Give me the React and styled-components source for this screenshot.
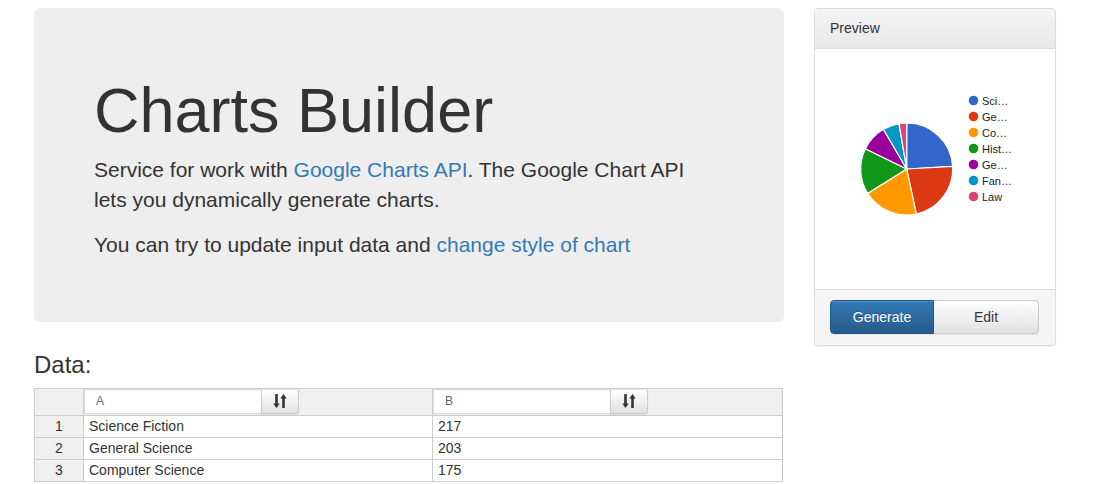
import React from "react";
import styled, { createGlobalStyle } from "styled-components";

const Global = createGlobalStyle`
  html, body { margin: 0; padding: 0; background: #fff; }
  body { font-family: "Liberation Sans", Arial, sans-serif; font-size: 14px; line-height: 1.42857; color: #333; }
  * { box-sizing: border-box; }
`;

const Page = styled.div`
  display: flex;
  align-items: flex-start;
  gap: 30px;
  padding: 8px 34px 0 34px;
`;

const Main = styled.div`
  width: 750px;
  flex: none;
`;

const Side = styled.div`
  width: 242px;
  flex: none;
`;

const Jumbotron = styled.div`
  background: #eee;
  border-radius: 6px;
  padding: 48px 60px 47px;
  margin-bottom: 30px;
`;

const Title = styled.h1`
  margin: 20px 0 10px;
  font-size: 63px;
  font-weight: 500;
  line-height: 1.1;
  color: #333;
`;

const Lead = styled.p`
  margin: 0 0 15px;
  max-width: 605px;
  font-size: 21px;
  font-weight: 200;
  line-height: 1.42857;
  color: #333;
`;

const Link = styled.a`
  color: #337ab7;
  text-decoration: none;
`;

const SectionTitle = styled.h3`
  margin: 0 0 9px;
  font-size: 24px;
  font-weight: 500;
  line-height: 1.1;
  color: #333;
`;

const Grid = styled.table`
  width: 748px;
  border-collapse: collapse;
  table-layout: fixed;
  font-size: 14px;
`;

const HeadCell = styled.th`
  background: #f0f0f0;
  border: 1px solid #ccc;
  padding: 0;
  height: 27px;
  text-align: left;
  font-weight: normal;
  vertical-align: top;
`;

const InputGroup = styled.div`
  display: flex;
  width: 215px;
  height: 25px;
`;

const ColInput = styled.div`
  width: 177px;
  background: #fff;
  border: 1px solid #ddd;
  border-right: none;
  font-size: 12px;
  color: #666;
  padding: 4px 11px;
  line-height: 15px;
  box-shadow: inset 0 1px 1px rgba(0,0,0,0.05);
`;

const SortButton = styled.button`
  width: 38px;
  height: 25px;
  border: 1px solid #ccc;
  border-top-color: #e4e4e4;
  border-radius: 0 3px 3px 0;
  background: linear-gradient(to bottom, #fff 0%, #e0e0e0 100%);
  display: flex;
  align-items: center;
  justify-content: center;
  padding: 0;
  box-shadow: 0 1px 1px rgba(0,0,0,0.08);
`;

const NumCell = styled.td`
  background: #f0f0f0;
  border: 1px solid #ccc;
  text-align: center;
  height: 22px;
  padding: 0;
  line-height: 20px;
  color: #333;
`;

const DataCell = styled.td`
  border: 1px solid #ccc;
  height: 22px;
  padding: 0 5px;
  line-height: 20px;
  color: #333;
  white-space: nowrap;
  overflow: hidden;
`;

const Panel = styled.div`
  border: 1px solid #ddd;
  border-radius: 4px;
  background: #fff;
  box-shadow: 0 1px 2px rgba(0,0,0,0.05);
  overflow: hidden;
`;

const PanelHeading = styled.div`
  padding: 10px 15px;
  height: 40px;
  background: linear-gradient(to bottom, #f5f5f5 0%, #e8e8e8 100%);
  border-bottom: 1px solid #ddd;
  font-size: 14px;
  line-height: 19px;
  color: #333;
`;

const PanelBody = styled.div`
  height: 240px;
  display: flex;
`;

const PanelFooter = styled.div`
  background: #f5f5f5;
  border-top: 1px solid #ddd;
  padding: 10px 15px 11px;
`;

const BtnGroup = styled.div`
  display: flex;
`;

const Btn = styled.button`
  width: ${(p) => p.$w}px;
  height: 34px;
  font-family: "Liberation Sans", Arial, sans-serif;
  font-size: 14px;
  padding: 6px 12px;
  border: 1px solid ${(p) => (p.$primary ? "#245580" : "#ccc")};
  color: ${(p) => (p.$primary ? "#fff" : "#333")};
  background: ${(p) =>
    p.$primary
      ? "linear-gradient(to bottom, #337ab7 0%, #265a88 100%)"
      : "linear-gradient(to bottom, #fff 0%, #e0e0e0 100%)"};
  border-radius: ${(p) => (p.$primary ? "4px 0 0 4px" : "0 4px 4px 0")};
  ${(p) => (p.$primary ? "" : "border-left: none;")}
  text-shadow: ${(p) => (p.$primary ? "0 -1px 0 rgba(0,0,0,0.2)" : "0 1px 0 #fff")};
  box-shadow: inset 0 1px 0 rgba(255,255,255,0.15), 0 1px 1px rgba(0,0,0,0.075);
`;

const SortIcon = () => (
  <svg width="14" height="16" viewBox="0 0 14 16">
    <path d="M3.5 1 V12" stroke="#333" strokeWidth="2.6" />
    <path d="M0.3 10.5 L3.5 15 L6.7 10.5 Z" fill="#333" />
    <path d="M10.5 15 V4" stroke="#333" strokeWidth="2.6" />
    <path d="M7.3 5.5 L10.5 1 L13.7 5.5 Z" fill="#333" />
  </svg>
);

const slices = [
  { label: "Sci…", v: 217, c: "#3366cc" },
  { label: "Ge…", v: 203, c: "#dc3912" },
  { label: "Co…", v: 175, c: "#ff9900" },
  { label: "Hist…", v: 145, c: "#109618" },
  { label: "Ge…", v: 84, c: "#990099" },
  { label: "Fan…", v: 52, c: "#0099c6" },
  { label: "Law", v: 24, c: "#dd4477" },
];

const PieChart = () => {
  const cx = 91.7;
  const cy = 120;
  const r = 46;
  const total = slices.reduce((s, d) => s + d.v, 0);
  let a = 0;
  const paths = slices.map((d, i) => {
    const a0 = a;
    const a1 = a + (d.v / total) * Math.PI * 2;
    a = a1;
    const x0 = cx + r * Math.sin(a0);
    const y0 = cy - r * Math.cos(a0);
    const x1 = cx + r * Math.sin(a1);
    const y1 = cy - r * Math.cos(a1);
    const large = a1 - a0 > Math.PI ? 1 : 0;
    return (
      <path
        key={i}
        d={`M${cx} ${cy} L${x0} ${y0} A${r} ${r} 0 ${large} 1 ${x1} ${y1} Z`}
        fill={d.c}
        stroke="#fff"
        strokeWidth="1.2"
      />
    );
  });
  return (
    <svg width="240" height="240" viewBox="0 0 240 240">
      {paths}
      {slices.map((d, i) => (
        <g key={i}>
          <circle cx="158.5" cy={51.5 + i * 16} r="4.8" fill={d.c} />
          <text
            x="167"
            y={55.5 + i * 16}
            fontFamily="Liberation Sans, Arial, sans-serif"
            fontSize="11"
            fill="#222"
          >
            {d.label}
          </text>
        </g>
      ))}
    </svg>
  );
};

const rows = [
  ["Science Fiction", "217"],
  ["General Science", "203"],
  ["Computer Science", "175"],
];

export default function App() {
  return (
    <>
      <Global />
      <Page>
        <Main>
          <Jumbotron>
            <Title>Charts Builder</Title>
            <Lead>
              Service for work with <Link href="#">Google Charts API</Link>. The Google Chart API
              lets you dynamically generate charts.
            </Lead>
            <Lead>
              You can try to update input data and <Link href="#">change style of chart</Link>
            </Lead>
          </Jumbotron>
          <SectionTitle>Data:</SectionTitle>
          <Grid>
            <colgroup>
              <col style={{ width: 49 }} />
              <col style={{ width: 349 }} />
              <col style={{ width: 350 }} />
            </colgroup>
            <thead>
              <tr>
                <HeadCell />
                {["A", "B"].map((h) => (
                  <HeadCell key={h}>
                    <InputGroup>
                      <ColInput>{h}</ColInput>
                      <SortButton>
                        <SortIcon />
                      </SortButton>
                    </InputGroup>
                  </HeadCell>
                ))}
              </tr>
            </thead>
            <tbody>
              {rows.map((r, i) => (
                <tr key={i}>
                  <NumCell>{i + 1}</NumCell>
                  <DataCell>{r[0]}</DataCell>
                  <DataCell>{r[1]}</DataCell>
                </tr>
              ))}
            </tbody>
          </Grid>
        </Main>
        <Side>
          <Panel>
            <PanelHeading>Preview</PanelHeading>
            <PanelBody>
              <PieChart />
            </PanelBody>
            <PanelFooter>
              <BtnGroup>
                <Btn $primary $w={104}>Generate</Btn>
                <Btn $w={105}>Edit</Btn>
              </BtnGroup>
            </PanelFooter>
          </Panel>
        </Side>
      </Page>
    </>
  );
}
